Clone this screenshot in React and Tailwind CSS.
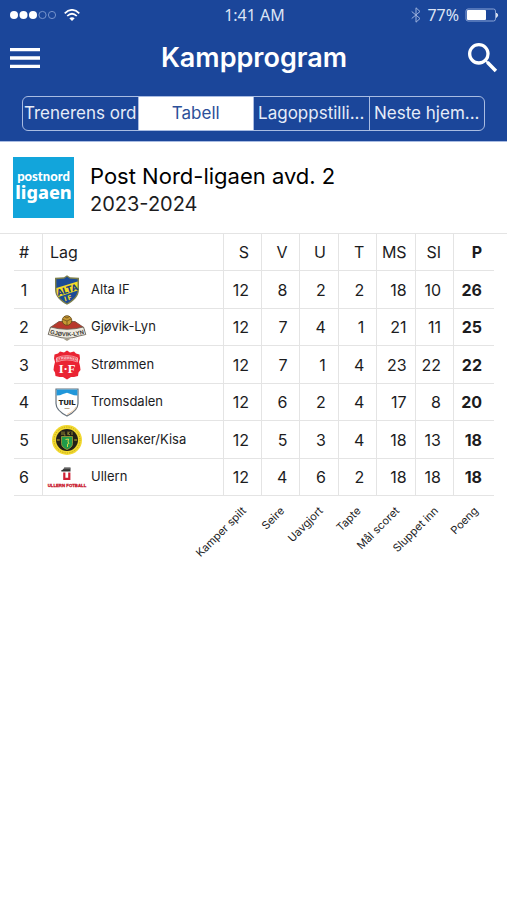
import { useState } from 'react';
import { MdMenu, MdSearch } from 'react-icons/md';

const tabs = ['Trenerens ord', 'Tabell', 'Lagoppstilli...', 'Neste hjem...'];

const columns = [
  { key: 's', short: 'S', label: 'Kamper spilt' },
  { key: 'v', short: 'V', label: 'Seire' },
  { key: 'u', short: 'U', label: 'Uavgjort' },
  { key: 't', short: 'T', label: 'Tapte' },
  { key: 'ms', short: 'MS', label: 'Mål scoret' },
  { key: 'si', short: 'SI', label: 'Sluppet inn' },
  { key: 'p', short: 'P', label: 'Poeng' },
];

const AltaLogo = () => (
  <svg viewBox="0 0 40 30" className="w-10 h-[30px]" aria-hidden="true">
    <path d="M20 .3 23 2.300 32 2.800v11.700c0 7-5.500 12-12 15.200-6.500-3.200-12-8.200-12-15.200V2.800L17 2.300Z" fill="#7d7f4c" />
    <path d="M20 1.800 23 3.800l7.600.400v10.400c0 6-4.600 10.600-10.600 13.700C14 25.200 9.400 20.600 9.400 14.600V4.200L17 3.800Z" fill="#1c4b96" />
    <path d="M9.400 13 30.600 6.500v9L11.500 22C10 19.500 9.400 17 9.400 14.500Z" fill="#f5dc28" />
    <text x="20" y="18" transform="rotate(-17 20 14)" textAnchor="middle" fontFamily="Roboto, sans-serif" fontWeight="900" fontSize="9" fill="#1c3f7c">ALTA</text>
    <text x="20.500" y="25.500" transform="rotate(-17 20 22)" textAnchor="middle" fontFamily="Roboto, sans-serif" fontWeight="900" fontSize="6.500" fill="#f5dc28">I F</text>
  </svg>
);

const GjovikLogo = () => (
  <svg viewBox="0 0 40 30" className="w-10 h-[30px]" aria-hidden="true">
    <path d="M4 15 12 9.500h16L36 15l1.500 4H2.500Z" fill="#b8382c" stroke="#6d4a3a" strokeWidth=".8" />
    <circle cx="20" cy="8.500" r="4.800" fill="#c79a35" stroke="#5f4415" strokeWidth=".8" />
    <path d="M16 7.500 20 9l4-2M20 9v4M17.500 4.800 20 6l2.500-1.500" fill="none" stroke="#5f4415" strokeWidth=".7" />
    <path d="M3.500 15Q20 19.500 36.500 15L38.800 22.500 32 24Q20 28.500 8 24L1.200 22.500Z" fill="#efece2" stroke="#6a6257" strokeWidth=".9" />
    <path id="gjovik-arc" d="M3 21.500Q20 27 37 21.500" fill="none" />
    <text fontFamily="Liberation Sans, sans-serif" fontWeight="700" fontSize="5.800" fill="#3b3731">
      <textPath href="#gjovik-arc" startOffset="50%" textAnchor="middle">GJØVIK-LYN</textPath>
    </text>
    <path d="M16 26.500h8l-4 2.500Z" fill="#a39b86" />
  </svg>
);

const StrommenLogo = () => (
  <svg viewBox="0 0 40 30" className="w-10 h-[30px]" aria-hidden="true">
    <path d="M20 .5 23 2.500 27 1.500l2 2 3.500 1 .5 4-1 3.500 1 4 .5 4-2 2.500-.5 3.500-4 1L24 27l-4 2.500L16 27l-3.500 0-4-1-.5-3.500L6.500 20l.5-4 1-4-1-3.500.5-4 3.500-1 2-2 4 1Z" fill="#ea2433" />
    <path d="M9.500 7.800Q20 3.500 30.500 7.800v4.200Q20 7.800 9.500 12Z" fill="none" stroke="#fbc3c6" strokeWidth=".7" />
    <path id="strommen-arc" d="M10 11.200Q20 7 30 11.200" fill="none" />
    <text fontFamily="Liberation Sans, sans-serif" fontWeight="700" fontSize="3.600" fill="#fde0e1">
      <textPath href="#strommen-arc" startOffset="50%" textAnchor="middle">STRØMMEN</textPath>
    </text>
    <text x="20" y="23" textAnchor="middle" fontFamily="Liberation Serif, serif" fontWeight="700" fontSize="12.500" fill="#fff">I·F</text>
  </svg>
);

const TromsdalenLogo = () => (
  <svg viewBox="0 0 40 30" className="w-10 h-[30px]" aria-hidden="true">
    <path d="M9 2h22v14.500c0 5.500-5 9.500-11 12.500-6-3-11-7-11-12.500Z" fill="#fff" stroke="#67727c" strokeWidth="1.200" />
    <path d="M9.600 2.600h20.800v6L27 8.200l-3.500-1.200L20 5.800 16 7l-3 1.200-3.400.400Z" fill="#2197da" />
    <path d="M20 27.500c4.500-2.300 7.800-4.500 9.200-7.800" fill="none" stroke="#e4b98b" strokeWidth=".8" />
    <text x="20" y="18" textAnchor="middle" fontFamily="Roboto, sans-serif" fontWeight="900" fontSize="8" fill="#222">TUIL</text>
    <path d="M17.500 21.500h5" stroke="#b7a58c" strokeWidth="1" />
  </svg>
);

const UllensakerLogo = () => (
  <svg viewBox="0 0 40 30" className="w-10 h-[30px]" aria-hidden="true">
    <circle cx="20" cy="15" r="15" fill="#f2d92f" />
    <circle cx="20" cy="15" r="13" fill="none" stroke="#b59d1c" strokeWidth=".9" strokeDasharray="1.200 1.200" />
    <circle cx="20" cy="15" r="11" fill="#221f17" />
    <path d="M14.500 11.500h11v7c0 3-2.500 4.800-5.500 6-3-1.200-5.500-3-5.500-6Z" fill="#1f9a4a" stroke="#a8a03a" strokeWidth=".8" />
    <path d="M15 10V6.500M17 6.500v3.500h1.500M21 6.500V10M21 8.500l2-2M21 8.500l2 1.500M25 6.500V10" fill="none" stroke="#a39736" strokeWidth=".9" />
    <path d="M18.500 14.500 21.500 14l-.5 3 1 1.500-1.500.5v3" fill="none" stroke="#d9d84a" strokeWidth="1" />
    <path d="M9.800 15h3M27.200 15h3" stroke="#c9b52d" strokeWidth="1" />
  </svg>
);

const UllernLogo = () => (
  <svg viewBox="0 0 40 30" className="w-10 h-[30px]" aria-hidden="true">
    <path d="M14 8.500c2-.6 2.800-1.500 3.200-3H23.500v4H14.500Z" fill="#333" />
    <path d="M17 6.700h6.500" stroke="#999" strokeWidth=".6" />
    <path d="M17.300 10.500v6.300h5v-6.300" fill="none" stroke="#cf2034" strokeWidth="2.200" />
    <text x="20" y="24.500" textAnchor="middle" fontFamily="Liberation Sans, sans-serif" fontWeight="700" fontSize="4.300" fill="#c9172b" stroke="#c9172b" strokeWidth=".3">ULLERN FOTBALL</text>
  </svg>
);

const teams = [
  { name: 'Alta IF', Logo: AltaLogo, s: 12, v: 8, u: 2, t: 2, ms: 18, si: 10, p: 26 },
  { name: 'Gjøvik-Lyn', Logo: GjovikLogo, s: 12, v: 7, u: 4, t: 1, ms: 21, si: 11, p: 25 },
  { name: 'Strømmen', Logo: StrommenLogo, s: 12, v: 7, u: 1, t: 4, ms: 23, si: 22, p: 22 },
  { name: 'Tromsdalen', Logo: TromsdalenLogo, s: 12, v: 6, u: 2, t: 4, ms: 17, si: 8, p: 20 },
  { name: 'Ullensaker/Kisa', Logo: UllensakerLogo, s: 12, v: 5, u: 3, t: 4, ms: 18, si: 13, p: 18 },
  { name: 'Ullern', Logo: UllernLogo, s: 12, v: 4, u: 6, t: 2, ms: 18, si: 18, p: 18 },
];

const StatusBar = () => (
  <div className="grid grid-cols-3 items-center h-[30px] pl-[10px] pr-2 text-[16px] text-[#dbe4f5] font-['Noto_Sans',sans-serif]">
    <div className="flex items-center gap-2">
      <svg viewBox="0 0 46 10" className="w-[46px] h-[10px]" aria-hidden="true">
        <circle cx="4" cy="5" r="4" fill="#fff" />
        <circle cx="13.500" cy="5" r="4" fill="#fff" />
        <circle cx="23" cy="5" r="4" fill="#fff" />
        <circle cx="32.500" cy="5" r="3.600" fill="none" stroke="#7f9bd0" strokeWidth=".9" />
        <circle cx="42" cy="5" r="3.600" fill="none" stroke="#7f9bd0" strokeWidth=".9" />
      </svg>
      <svg viewBox="0 0 16 12" className="w-4 h-3" fill="none" stroke="#fff" strokeWidth="1.700" aria-hidden="true">
        <path d="M.7 4.300Q8-2.600 15.300 4.300" />
        <path d="M3.200 7Q8 2.500 12.800 7" />
        <path d="M8 12 5.300 9.300Q8 7 10.700 9.300Z" fill="#fff" stroke="none" />
      </svg>
    </div>
    <span className="text-center">1:41 AM</span>
    <div className="flex items-center justify-end">
      <svg viewBox="0 0 10 16" className="w-[10px] h-4 mr-[6px]" fill="none" stroke="#9db2dd" strokeWidth="1" aria-hidden="true">
        <path d="M.7 4.500 9 11.500 5 15.200V.8L9 4.500.7 11.500" />
      </svg>
      <span>77%</span>
      <svg viewBox="0 0 34 14" className="w-[34px] h-[14px] ml-[6px]" aria-hidden="true">
        <rect x="1" y="1" width="29.500" height="12" rx="2" fill="none" stroke="#8aa3d6" strokeWidth="1" />
        <rect x="2" y="2" width="19" height="10" rx="1" fill="#fff" />
        <path d="M31.500 5q2.500 2 0 4.500Z" fill="#fff" stroke="#fff" strokeWidth=".6" />
      </svg>
    </div>
  </div>
);

const App = () => {
  const [activeTab, setActiveTab] = useState('Tabell');

  return (
    <div className="min-h-screen bg-white text-[#1c1c1e] font-['Inter',sans-serif]">
      <header className="bg-[#1b469a] border-b border-[#a9bce2] text-white">
        <StatusBar />

        <div className="flex items-center justify-between h-14 pl-[5px] pr-1">
          <button type="button" aria-label="Meny">
            <MdMenu className="w-10 h-10" />
          </button>
          <h1 className="text-[27px] font-semibold">Kampprogram</h1>
          <button type="button" aria-label="Søk">
            <MdSearch className="w-10 h-10" />
          </button>
        </div>

        {/* Segmented tabs */}
        <div className="px-[22px] py-[10px]">
          <div className="flex h-[35px] border border-[#a9bce2] rounded-md overflow-hidden divide-x divide-[#a9bce2]">
            {tabs.map((tab) => (
              <button
                key={tab}
                type="button"
                onClick={() => setActiveTab(tab)}
                className={`flex-1 basis-0 min-w-0 flex items-center justify-center whitespace-nowrap text-[17px] ${
                  tab === activeTab ? 'bg-white text-[#2c5099]' : 'text-[#e6ecf8]'
                }`}
              >
                {tab}
              </button>
            ))}
          </div>
        </div>
      </header>

      {/* League */}
      <section className="flex items-center gap-4 px-[13px] py-[15px] border-b border-[#e4e4e4]">
        <svg viewBox="0 0 61 61" className="w-[61px] h-[61px]" role="img" aria-label="postnord ligaen">
          <rect width="61" height="61" fill="#12a5db" />
          <text x="30.500" y="23.500" textAnchor="middle" fontFamily="Lato, sans-serif" fontWeight="900" fontSize="13" fill="#fff">postnord</text>
          <text x="30.500" y="42" textAnchor="middle" fontFamily="Noto Sans, sans-serif" fontWeight="800" fontSize="18" fill="#fff">ligaen</text>
        </svg>
        <div className="pt-1">
          <h2 className="text-[22px] leading-7 text-black">Post Nord-ligaen avd. 2</h2>
          <p className="text-[20px] leading-7">2023-2024</p>
        </div>
      </section>

      {/* Standings */}
      <div className="pl-[14px] pr-[13px]">
        <table className="w-full table-fixed border-separate border-spacing-0 text-[16px]">
          <colgroup>
            <col className="w-[29px]" />
            <col />
            {columns.map((col) => (
              <col key={col.key} className={col.key === 'p' ? 'w-10' : 'w-[8%]'} />
            ))}
          </colgroup>
          <thead>
            <tr className="h-[37px]">
              <th className="p-0 pr-2 font-normal text-center border-r border-b border-[#e4e4e4]">#</th>
              <th className="p-0 pl-[7px] font-normal text-left border-r border-b border-[#e4e4e4]">Lag</th>
              {columns.map((col) => (
                <th
                  key={col.key}
                  className={`p-0 text-right border-b border-[#e4e4e4] ${
                    col.key === 'p' ? 'font-bold' : 'font-normal border-r'
                  } ${col.key === 'ms' ? 'pr-2' : 'pr-3'}`}
                >
                  {col.short}
                </th>
              ))}
            </tr>
          </thead>
          <tbody>
            {teams.map((team, index) => (
              <tr key={team.name} className="odd:h-[38px] even:h-[37px]">
                <td className="p-0 pr-2 text-center border-r border-b border-[#e4e4e4]">{index + 1}</td>
                <td className="p-0 border-r border-b border-[#e4e4e4]">
                  <div className="flex items-center gap-1 pl-1 text-[13px]">
                    <team.Logo />
                    {team.name}
                  </div>
                </td>
                {columns.map((col) => (
                  <td
                    key={col.key}
                    className={`p-0 text-right border-b border-[#e4e4e4] ${
                      col.key === 'p' ? 'font-bold' : 'border-r'
                    } ${col.key === 'ms' ? 'pr-2' : 'pr-3'}`}
                  >
                    {team[col.key]}
                  </td>
                ))}
              </tr>
            ))}
          </tbody>
          <tfoot>
            <tr className="h-20 align-top">
              <td></td>
              <td></td>
              {columns.map((col) => (
                <td key={col.key} className="p-0 pt-[7px] pr-6">
                  <div className="flex justify-end">
                    <span className="origin-top-right -rotate-45 whitespace-nowrap text-[11px] leading-4">{col.label}</span>
                  </div>
                </td>
              ))}
            </tr>
          </tfoot>
        </table>
      </div>
    </div>
  );
};

export default App;
